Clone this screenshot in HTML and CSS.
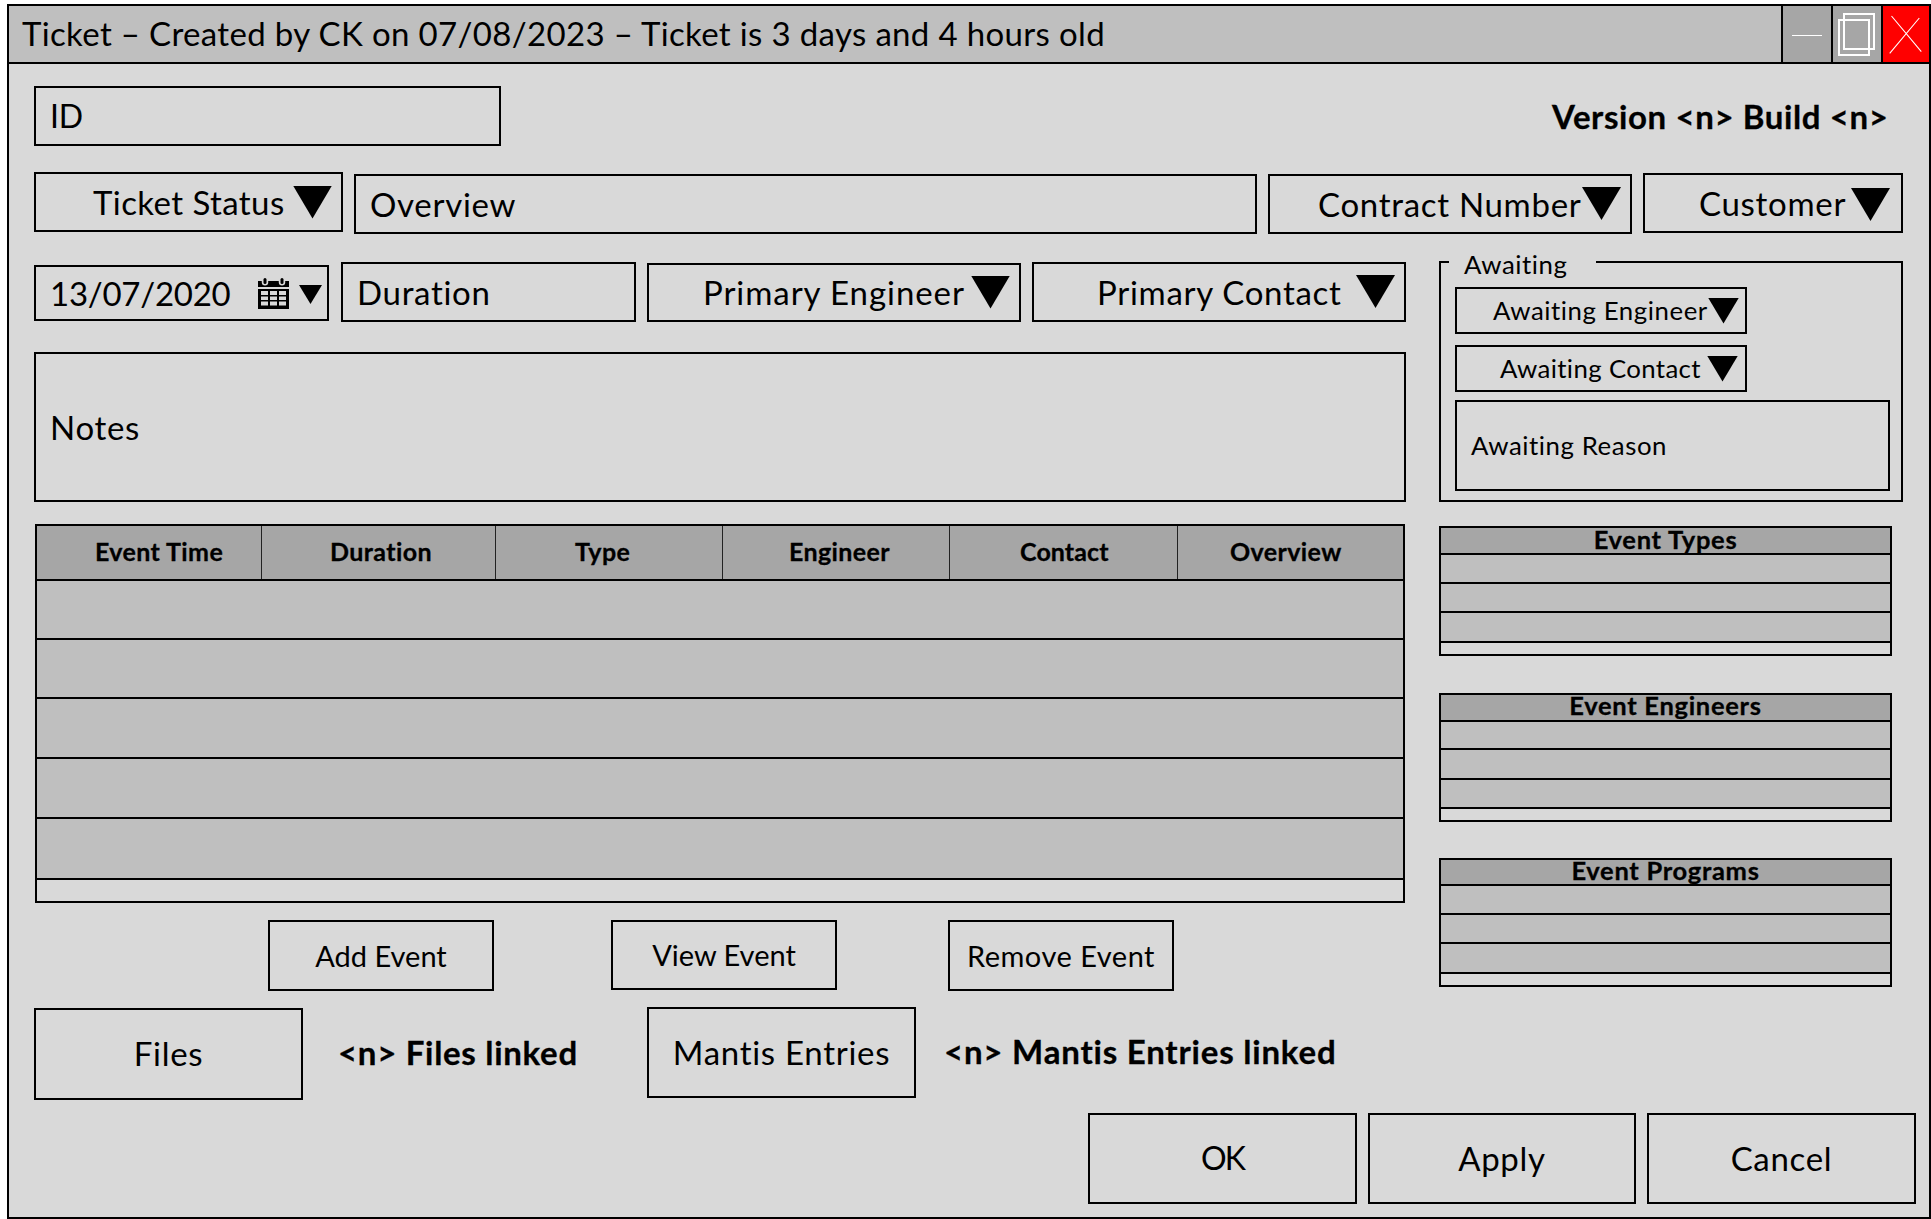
FILE: index.html
```html
<!DOCTYPE html>
<html lang="en">
<head>
<meta charset="utf-8">
<title>Ticket</title>
<link rel="stylesheet" href="styles.css">
</head>
<body>
<div class="window">
  <header class="titlebar">
    <h1 class="title">Ticket – Created by CK on 07/08/2023 – Ticket is 3 days and 4 hours old</h1>
    <button class="winbtn" aria-label="Minimise">
      <svg width="48" height="56" viewBox="0 0 48 56"><path d="M9 29.5H39" stroke="#fff" stroke-width="1"/></svg>
    </button>
    <button class="winbtn" aria-label="Restore">
      <svg width="48" height="56" viewBox="0 0 48 56" fill="none" stroke="#fff" stroke-width="2"><rect x="11" y="8" width="30" height="35"/><rect x="6" y="14" width="30" height="35"/></svg>
    </button>
    <button class="winbtn close" aria-label="Close">
      <svg width="46" height="56" viewBox="0 0 46 56" stroke="#fff" stroke-width="1.1"><path d="M8.5 10L38.3 45.7M36.3 12L6.7 47.3"/></svg>
    </button>
  </header>

  <main class="content">
    <div class="row id-row">
      <div class="field id">ID</div>
      <strong class="version">Version &lt;n&gt; Build &lt;n&gt;</strong>
    </div>

    <div class="row overview-row">
      <div class="field combo status"><span>Ticket Status</span><i class="arrow"></i></div>
      <div class="field overview">Overview</div>
      <div class="field combo contract"><span>Contract Number</span><i class="arrow"></i></div>
      <div class="field combo customer"><span>Customer</span><i class="arrow"></i></div>
    </div>

    <div class="columns">
      <section class="main-col">
        <div class="row detail-row">
          <div class="field date"><span>13/07/2020</span>
            <svg class="calendar" width="31" height="31" viewBox="0 0 31 31">
              <path d="M0 3H31V9H0Z"/>
              <path d="M0 11H31V31H0Z"/>
              <g fill="#d9d9d9">
                <path d="M3 13h7v4H3zM12 13h7v4h-7zM21 13h7v4h-7zM3 18.5h7v3.5H3zM12 18.5h7v3.5h-7zM21 18.5h7v3.5h-7zM3 23.5h7v4H3zM12 23.5h7v4h-7zM21 23.5h7v4h-7z"/>
                <rect x="3.8" y="0" width="6.4" height="7.5" rx="3.2"/><rect x="20.8" y="0" width="6.4" height="7.5" rx="3.2"/>
              </g>
              <rect x="5.5" y="0" width="3" height="6" rx="1.5"/><rect x="22.5" y="0" width="3" height="6" rx="1.5"/>
            </svg>
            <i class="arrow tiny"></i>
          </div>
          <div class="field duration">Duration</div>
          <div class="field combo engineer"><span>Primary Engineer</span><i class="arrow"></i></div>
          <div class="field combo contact"><span>Primary Contact</span><i class="arrow"></i></div>
        </div>

        <div class="field notes">Notes</div>

        <div class="events">
          <div class="events-head">
            <div class="c-time">Event Time</div>
            <div class="c-duration">Duration</div>
            <div class="c-type">Type</div>
            <div class="c-engineer">Engineer</div>
            <div class="c-contact">Contact</div>
            <div class="c-overview">Overview</div>
          </div>
          <div class="line"></div>
          <div class="line"></div>
          <div class="line"></div>
          <div class="line"></div>
          <div class="line"></div>
          <div class="line rest"></div>
        </div>

        <div class="row event-actions">
          <button class="btn small add">Add Event</button>
          <button class="btn small view">View Event</button>
          <button class="btn small remove">Remove Event</button>
        </div>

        <div class="row links">
          <button class="btn files">Files</button>
          <strong class="files-count">&lt;n&gt; Files linked</strong>
          <button class="btn mantis">Mantis Entries</button>
          <strong class="mantis-count">&lt;n&gt; Mantis Entries linked</strong>
        </div>
      </section>

      <aside class="side-col">
        <div class="awaiting">
          <span class="legend">Awaiting</span>
          <div class="field combo a-engineer"><span>Awaiting Engineer</span><i class="arrow mid"></i></div>
          <div class="field combo a-contact"><span>Awaiting Contact</span><i class="arrow mid"></i></div>
          <div class="field a-reason">Awaiting Reason</div>
        </div>

        <div class="list types">
          <h2>Event Types</h2>
          <div class="item"></div><div class="item"></div><div class="item"></div><div class="item rest"></div>
        </div>
        <div class="list engineers">
          <h2>Event Engineers</h2>
          <div class="item"></div><div class="item"></div><div class="item"></div><div class="item rest"></div>
        </div>
        <div class="list programs">
          <h2>Event Programs</h2>
          <div class="item"></div><div class="item"></div><div class="item"></div><div class="item rest"></div>
        </div>
      </aside>
    </div>

    <footer class="footer">
      <button class="btn ok">OK</button>
      <button class="btn apply">Apply</button>
      <button class="btn cancel">Cancel</button>
    </footer>
  </main>
</div>
</body>
</html>
```
FILE: styles.css
```css
* { box-sizing: border-box; }

body {
  margin: 0;
  background: #fff;
  color: #000;
  font: 33px/38px Lato, sans-serif;
  letter-spacing: 0.7px;
  white-space: nowrap;
  overflow: hidden;
}

button {
  margin: 0;
  padding: 0;
  color: inherit;
  font: inherit;
  letter-spacing: inherit;
  background: none;
  border: 0;
}

strong, .events-head, .list h2 { -webkit-text-stroke: 0.3px #000; }

.window {
  width: 1924px;
  height: 1215px;
  margin: 4px 0 0 7px;
  border: 2px solid #000;
  background: #d9d9d9;
}

/* Title bar */
.titlebar {
  display: flex;
  height: 58px;
  border-bottom: 2px solid #000;
  background: #bfbfbf;
}
.title {
  flex: 1;
  margin: 0;
  padding-left: 13px;
  font-size: 33px;
  font-weight: 400;
  line-height: 55px;
  letter-spacing: 0.34px;
}
.winbtn {
  width: 50px;
  height: 56px;
  border-left: 2px solid #000;
  background: #a6a6a6;
}
.winbtn.close { width: 48px; background: #f00; }
.winbtn svg { display: block; }

/* Fields */
.content { padding: 22px 0 0 25px; }
.row { display: flex; align-items: flex-start; }
.field {
  display: flex;
  align-items: center;
  flex: none;
  height: 60px;
  padding: 0 0 0 14px;
  border: 2px solid #000;
}
.combo span { flex: 1; min-width: 0; }
.arrow {
  flex: none;
  width: 39px;
  height: 33px;
  margin: 0 9px 0 0;
  background: #000;
  clip-path: polygon(0 0, 100% 0, 50% 100%);
}
.arrow.mid { width: 31px; height: 26px; margin-right: 6px; }
.arrow.tiny { width: 23px; height: 19px; margin: 3px 5px 0 10px; }

.id { width: 467px; font-size: 32px; letter-spacing: -0.3px; }
.id-row { height: 86px; }
.version { margin: 11px 0 0 1051px; letter-spacing: 0.6px; }

.overview-row { height: 89px; }
.status { width: 309px; padding-left: 57px; letter-spacing: 0.42px; }
.overview { width: 903px; margin: 2px 11px 0; padding: 0 0 1px 14px; }
.contract { width: 364px; margin-top: 2px; padding: 0 0 1px 48px; }
.customer { width: 260px; margin: 1px 0 0 11px; padding: 0 0 1px 54px; }
.customer .arrow { margin: 4px 11px 0 0; }

.columns { display: flex; gap: 33px; height: 852px; }
.main-col { width: 1372px; }
.side-col { width: 464px; }

.detail-row { height: 91px; padding-top: 1px; }
.date { width: 295px; height: 56px; margin-top: 3px; letter-spacing: -0.25px; }
.date span { flex: 1; }
.calendar { flex: none; display: block; margin-top: 1px; }
.duration { width: 295px; height: 60px; margin: 0 11px 0 12px; padding-left: 14px; }
.engineer { width: 374px; height: 59px; margin-top: 1px; padding: 0 0 1px 54px; letter-spacing: 0.93px; }
.contact { width: 374px; margin-left: 11px; padding-left: 63px; }
.contact .arrow { margin-top: -1px; }
.notes { height: 150px; padding-bottom: 1px; }

/* Event table */
.events {
  width: 1370px;
  height: 379px;
  margin: 22px 0 0 1px;
  border: 2px solid #000;
}
.events-head {
  display: grid;
  grid-template-columns: 224px 234px 227px 227px 228px 1fr;
  height: 53px;
  background: #a6a6a6;
  font-size: 25px;
  font-weight: 700;
  line-height: 50px;
  letter-spacing: 0.4px;
}
.events-head div + div { border-left: 1px solid #222; }
.c-time { padding-left: 58px; }
.c-duration { padding-left: 68px; }
.c-type { padding-left: 79px; }
.c-engineer { padding-left: 66px; }
.c-contact { padding-left: 70px; letter-spacing: 0.1px; }
.c-overview { padding-left: 52px; }
.line { height: 60px; border-top: 2px solid #000; background: #bfbfbf; }
.line:nth-child(2) { height: 59px; }
.line:nth-child(3) { height: 59px; }
.line:nth-child(6) { height: 61px; }
.line.rest { height: 23px; background: none; }

/* Buttons */
.btn {
  flex: none;
  width: 269px;
  height: 91px;
  padding-bottom: 2px;
  border: 2px solid #000;
  text-align: center;
}
.btn.small { width: 226px; height: 71px; padding: 0; font-size: 29px; letter-spacing: 0; }
.event-actions { height: 104px; padding-top: 17px; }
.add { margin-left: 234px; }
.event-actions .view { margin-left: 117px; height: 70px; }
.event-actions .remove { margin-left: 111px; letter-spacing: 0.5px; }

.files { margin-top: 1px; height: 92px; }
.files-count { margin: 26px 0 0 35px; width: 309px; }
.files-count, .mantis-count { flex: none; letter-spacing: 0.7px; }
.mantis-count { margin: 25px 0 0 28px; letter-spacing: 0.8px; }

/* Awaiting group */
.awaiting {
  position: relative;
  width: 464px;
  height: 241px;
  padding: 24px 0 0 14px;
  border: 2px solid #000;
  font-size: 25.8px;
  line-height: 30px;
  letter-spacing: 0.56px;
}
.awaiting .field { padding-bottom: 2px; }
.awaiting .arrow { margin-top: 2px; }
.legend {
  position: absolute;
  left: 8px;
  top: -14px;
  width: 147px;
  padding-left: 15px;
  background: #d9d9d9;
}
.a-engineer { width: 292px; height: 47px; padding-left: 36px; }
.a-contact { width: 292px; height: 47px; margin-top: 11px; padding-left: 43px; letter-spacing: 0.36px; }
.a-contact .arrow { margin-right: 7px; }
.a-reason { width: 435px; height: 91px; margin-top: 8px; }

/* Side lists */
.list { width: 453px; border: 2px solid #000; }
.list h2 {
  height: 25px;
  margin: 0;
  background: #a6a6a6;
  font-size: 25.5px;
  line-height: 22px;
  letter-spacing: 0.7px;
  text-align: center;
}
.item { height: 29px; border-top: 2px solid #000; background: #bfbfbf; }
.item.rest { height: 13px; background: none; }
.types { margin-top: 24px; height: 130px; }
.types .item:nth-child(4) { height: 30px; }
.engineers { margin-top: 37px; height: 129px; }
.engineers h2, .programs h2 { line-height: 21px; }
.engineers .item:nth-child(2) { height: 28px; }
.engineers .item:nth-child(3) { height: 30px; }
.programs { margin-top: 36px; height: 129px; }
.programs h2 { height: 24px; }
.programs .item:nth-child(4) { height: 30px; }

/* Dialog buttons */
.footer { display: flex; gap: 11px; padding-left: 1054px; }
.ok { font-size: 32px; letter-spacing: -2px; }
.apply { width: 268px; }
```
